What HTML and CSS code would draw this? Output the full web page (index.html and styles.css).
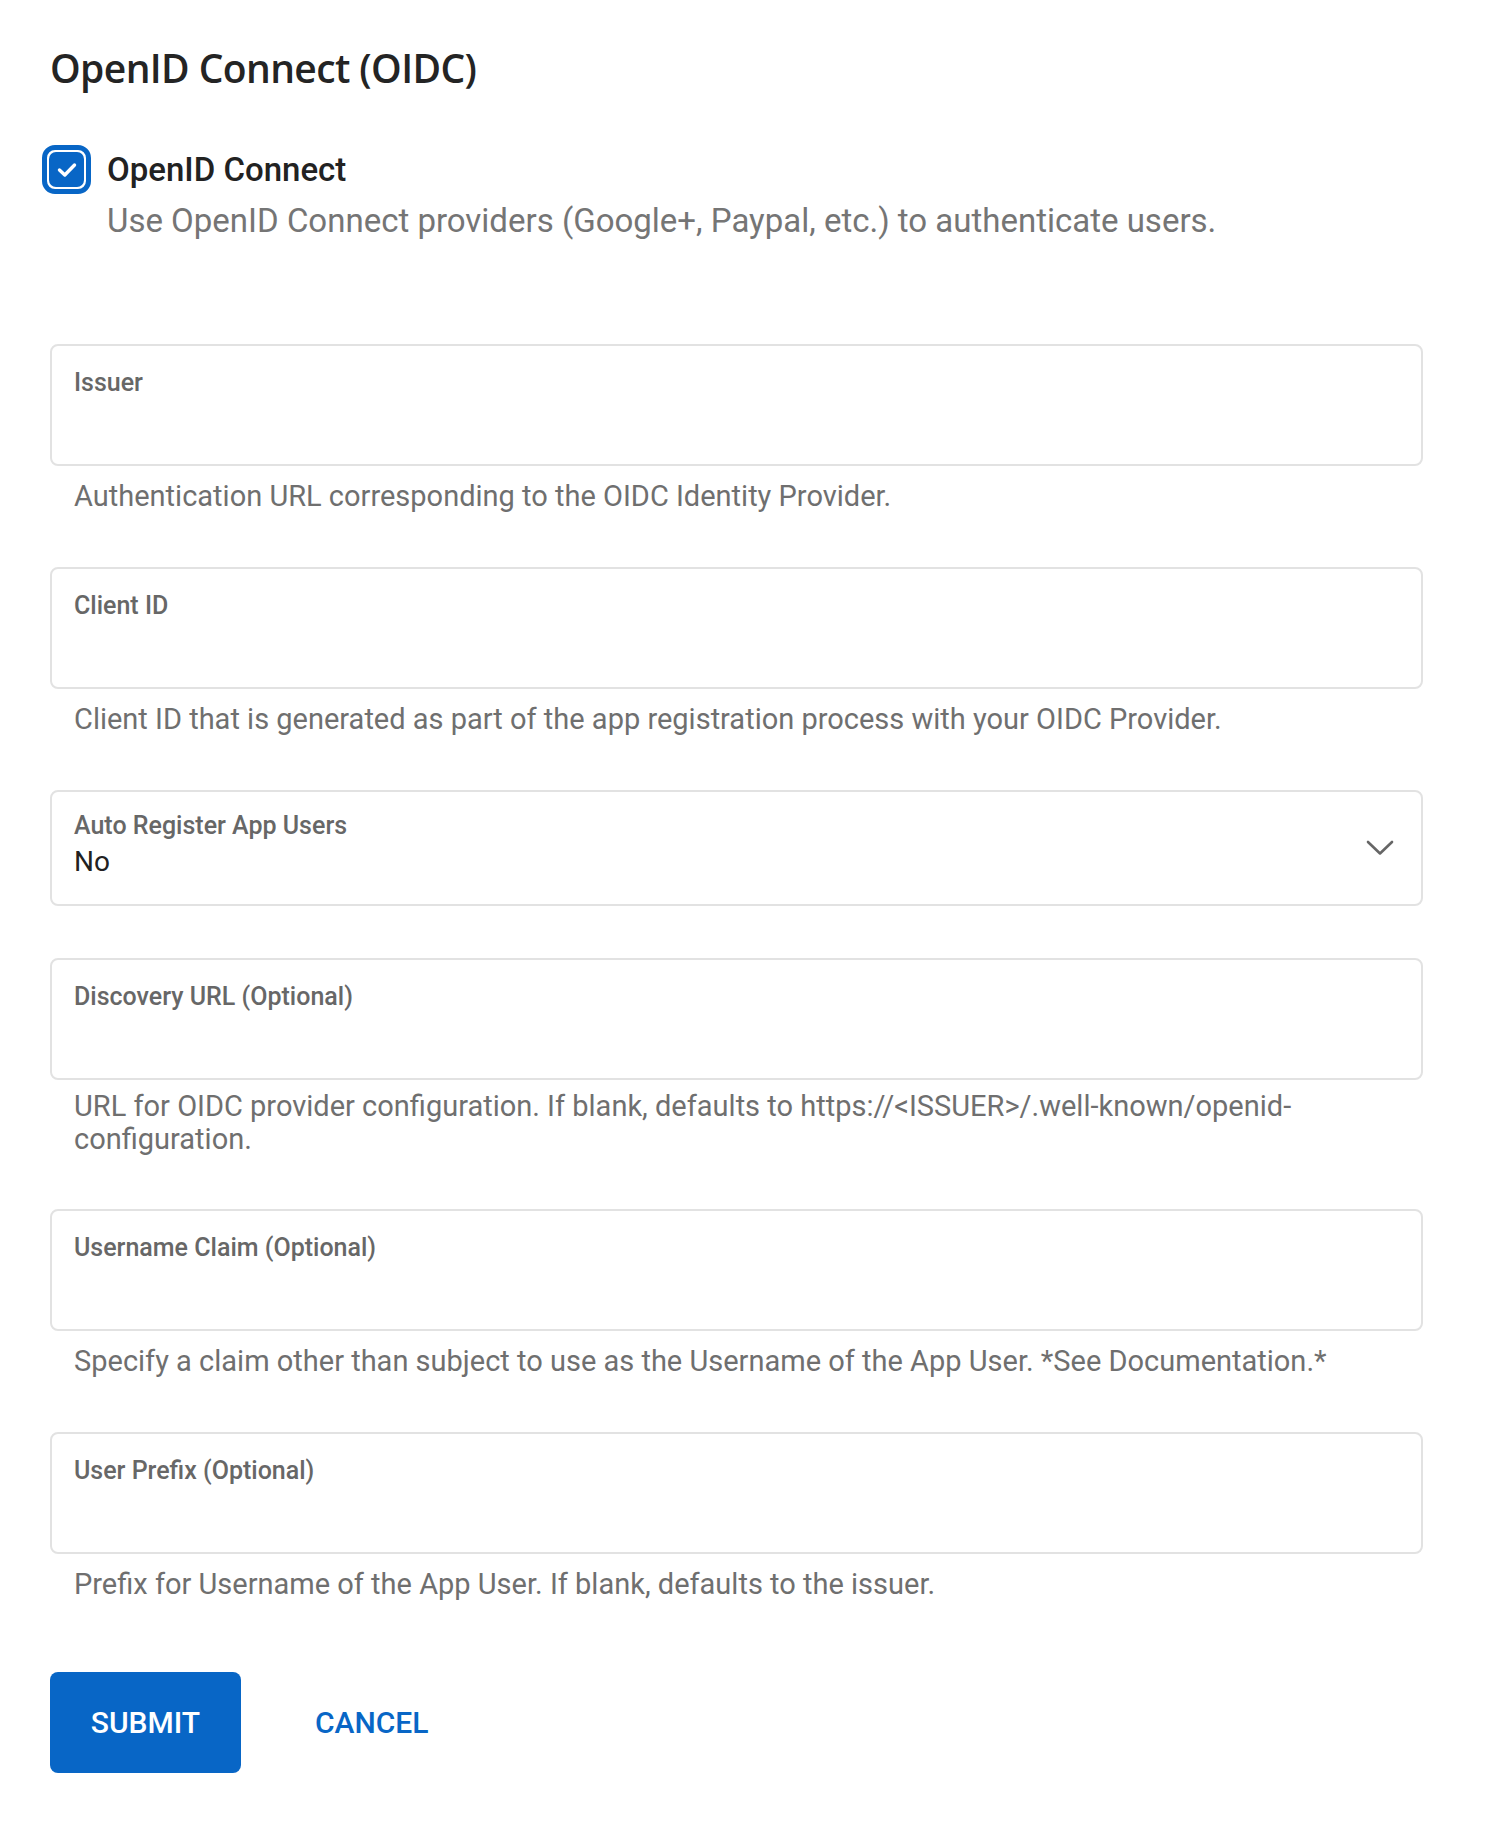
FILE: index.html
```html
<!DOCTYPE html>
<html lang="en">
<head>
<meta charset="utf-8">
<title>OpenID Connect (OIDC)</title>
<link rel="stylesheet" href="styles.css">
</head>
<body>
<div class="page">
  <h1 class="title">OpenID Connect (OIDC)</h1>

  <div class="check-row">
    <span class="checkbox">
      <span class="checkbox-inner">
        <svg width="20" height="16" viewBox="0 0 20 16"><path d="M2.5 8 L7.8 13 L17.5 3" fill="none" stroke="#fff" stroke-width="3.4" stroke-linecap="round" stroke-linejoin="round"/></svg>
      </span>
    </span>
    <div class="check-text">
      <div class="check-label">OpenID Connect</div>
      <div class="check-desc">Use OpenID Connect providers (Google+, Paypal, etc.) to authenticate users.</div>
    </div>
  </div>

  <form class="fields">
    <div class="field">
      <div class="box">
        <div class="box-label">Issuer</div>
      </div>
      <div class="help">Authentication URL corresponding to the OIDC Identity Provider.</div>
    </div>

    <div class="field">
      <div class="box">
        <div class="box-label">Client ID</div>
      </div>
      <div class="help">Client ID that is generated as part of the app registration process with your OIDC Provider.</div>
    </div>

    <div class="field field-nohelp">
      <div class="box box-select">
        <div class="select-text">
          <div class="box-label">Auto Register App Users</div>
          <div class="select-value">No</div>
        </div>
        <svg class="chevron" width="28" height="16" viewBox="0 0 28 16"><path d="M2 2 L14 13.5 L26 2" fill="none" stroke="#666" stroke-width="2.6" stroke-linecap="round" stroke-linejoin="round"/></svg>
      </div>
    </div>

    <div class="field field-multi">
      <div class="box">
        <div class="box-label">Discovery URL (Optional)</div>
      </div>
      <div class="help help-multi">URL for OIDC provider configuration. If blank, defaults to https://&lt;ISSUER&gt;/.well-known/openid-configuration.</div>
    </div>

    <div class="field">
      <div class="box">
        <div class="box-label">Username Claim (Optional)</div>
      </div>
      <div class="help">Specify a claim other than subject to use as the Username of the App User. *See Documentation.*</div>
    </div>

    <div class="field field-last">
      <div class="box">
        <div class="box-label">User Prefix (Optional)</div>
      </div>
      <div class="help">Prefix for Username of the App User. If blank, defaults to the issuer.</div>
    </div>

    <div class="actions">
      <button type="button" class="btn btn-primary">SUBMIT</button>
      <button type="button" class="btn btn-text">CANCEL</button>
    </div>
  </form>
</div>
</body>
</html>
```

FILE: styles.css
```css
html, body {
  margin: 0;
  padding: 0;
  background: #ffffff;
}

body {
  font-family: Roboto, "Liberation Sans", sans-serif;
  color: #212121;
}

.page {
  padding: 44px 77px 40px 50px;
}

.title {
  margin: 0;
  font-family: "Open Sans", "Noto Sans", sans-serif;
  font-weight: 600;
  font-size: 39px;
  line-height: 47px;
  color: #242424;
  letter-spacing: -0.6px;
}

.check-row {
  display: flex;
  align-items: flex-start;
  margin-top: 54px;
  margin-left: -8px;
}

.checkbox {
  flex: none;
  width: 49px;
  height: 49px;
  box-sizing: border-box;
  border: 5px solid #0866c6;
  border-radius: 13px;
  padding: 2px;
  background: #fff;
}

.checkbox-inner {
  display: flex;
  align-items: center;
  justify-content: center;
  width: 100%;
  height: 100%;
  background: #0866c6;
  border-radius: 7px;
}

.check-text {
  margin-left: 16px;
  padding-top: 6px;
}

.check-label {
  font-size: 33px;
  line-height: 38px;
  font-weight: 500;
  color: #222;
}

.check-desc {
  margin-top: 13px;
  font-size: 33px;
  line-height: 38px;
  color: #757575;
}

.fields {
  margin-top: 104px;
}

.field {
  margin-bottom: 54px;
}

.field-nohelp {
  margin-bottom: 52px;
}

.field-multi {
  margin-bottom: 53px;
}

.field-last {
  margin-bottom: 71px;
}

.box {
  box-sizing: border-box;
  height: 122px;
  border: 2px solid #e2e2e2;
  border-radius: 8px;
  padding: 23px 22px 0;
}

.box-label {
  font-size: 25px;
  line-height: 28px;
  font-weight: 500;
  color: #676767;
}

.box-select {
  height: 116px;
  padding: 20px 27px 0 22px;
  display: flex;
  justify-content: space-between;
  align-items: flex-start;
}

.select-value {
  margin-top: 5px;
  font-size: 28px;
  line-height: 34px;
  color: #212121;
}

.chevron {
  align-self: center;
  margin-top: -20px;
}

.help {
  margin-top: 14px;
  padding-left: 24px;
  font-size: 29px;
  line-height: 33px;
  color: #6f6f6f;
}

.help-multi {
  margin-top: 10px;
}

.actions {
  display: flex;
  align-items: center;
  gap: 40px;
}

.btn {
  font-family: Roboto, "Liberation Sans", sans-serif;
  font-weight: 500;
  font-size: 30px;
  border: none;
  cursor: pointer;
}

.btn-primary {
  width: 191px;
  height: 101px;
  border-radius: 8px;
  background: #0866c6;
  color: #ffffff;
}

.btn-text {
  background: transparent;
  color: #0866c6;
  padding: 0 34px;
  height: 101px;
}
```
